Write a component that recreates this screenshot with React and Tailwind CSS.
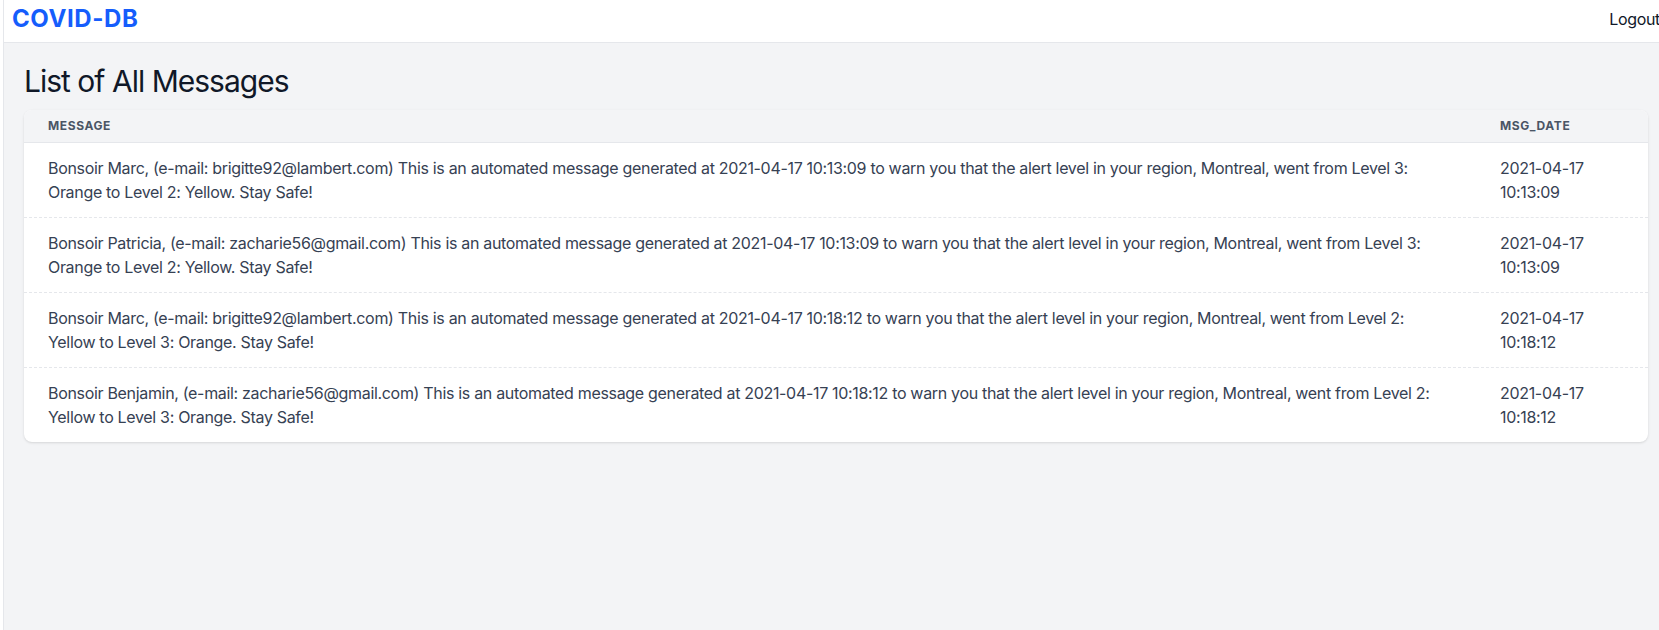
const messages = [
  {
    id: 1,
    text: "Bonsoir Marc, (e-mail: brigitte92@lambert.com) This is an automated message generated at 2021-04-17 10:13:09 to warn you that the alert level in your region, Montreal, went from Level 3: Orange to Level 2: Yellow. Stay Safe!",
    date: "2021-04-17 10:13:09",
  },
  {
    id: 2,
    text: "Bonsoir Patricia, (e-mail: zacharie56@gmail.com) This is an automated message generated at 2021-04-17 10:13:09 to warn you that the alert level in your region, Montreal, went from Level 3: Orange to Level 2: Yellow. Stay Safe!",
    date: "2021-04-17 10:13:09",
  },
  {
    id: 3,
    text: "Bonsoir Marc, (e-mail: brigitte92@lambert.com) This is an automated message generated at 2021-04-17 10:18:12 to warn you that the alert level in your region, Montreal, went from Level 2: Yellow to Level 3: Orange. Stay Safe!",
    date: "2021-04-17 10:18:12",
  },
  {
    id: 4,
    text: "Bonsoir Benjamin, (e-mail: zacharie56@gmail.com) This is an automated message generated at 2021-04-17 10:18:12 to warn you that the alert level in your region, Montreal, went from Level 2: Yellow to Level 3: Orange. Stay Safe!",
    date: "2021-04-17 10:18:12",
  },
];

export default function App() {
  return (
    <div
      className="w-full min-h-[630px] overflow-hidden bg-white"
      style={{ fontFamily: "Inter, 'Noto Sans', sans-serif" }}
    >
      <div className="flex w-[1668px] min-h-[630px]">
        <div className="w-[3px] shrink-0 bg-white" />
        <div className="flex-1 border-l border-gray-200 bg-gray-100 flex flex-col">
          {/* Navigation */}
          <nav className="h-[43px] bg-white border-b border-gray-200 flex items-center justify-between pl-[8px] pr-[8px] pb-[5px]">
            <h1 className="text-2xl font-bold tracking-wide text-blue-600">
              COVID-DB
            </h1>
            <button className="text-base tracking-[-0.02em] text-gray-900">
              Logout
            </button>
          </nav>

          <div className="px-5">
            <h2 className="mt-[20px] mb-[11px] text-3xl tracking-[-0.033em] text-gray-900">
              List of All Messages
            </h2>

            {/* Messages table */}
            <div className="bg-white rounded-lg shadow overflow-hidden">
              <table className="w-full table-fixed">
                <thead className="bg-gray-100 border-b border-gray-200">
                  <tr>
                    <th className="px-6 py-2 text-left text-xs font-bold uppercase tracking-wider text-gray-600">
                      Message
                    </th>
                    <th className="w-[172px] px-6 py-2 text-left text-xs font-bold uppercase tracking-wider text-gray-600">
                      Msg_Date
                    </th>
                  </tr>
                </thead>
                <tbody>
                  {messages.map((msg, index) => (
                    <tr
                      key={msg.id}
                      className={
                        index < messages.length - 1
                          ? "border-b border-dashed border-gray-200"
                          : ""
                      }
                    >
                      <td className="px-6 py-[13px] text-base leading-6 tracking-[-0.02em] text-gray-700 align-top">
                        {msg.text}
                      </td>
                      <td className="px-6 py-[13px] text-base leading-6 tracking-[-0.02em] text-gray-700 align-top">
                        {msg.date}
                      </td>
                    </tr>
                  ))}
                </tbody>
              </table>
            </div>
          </div>
        </div>
      </div>
    </div>
  );
}
